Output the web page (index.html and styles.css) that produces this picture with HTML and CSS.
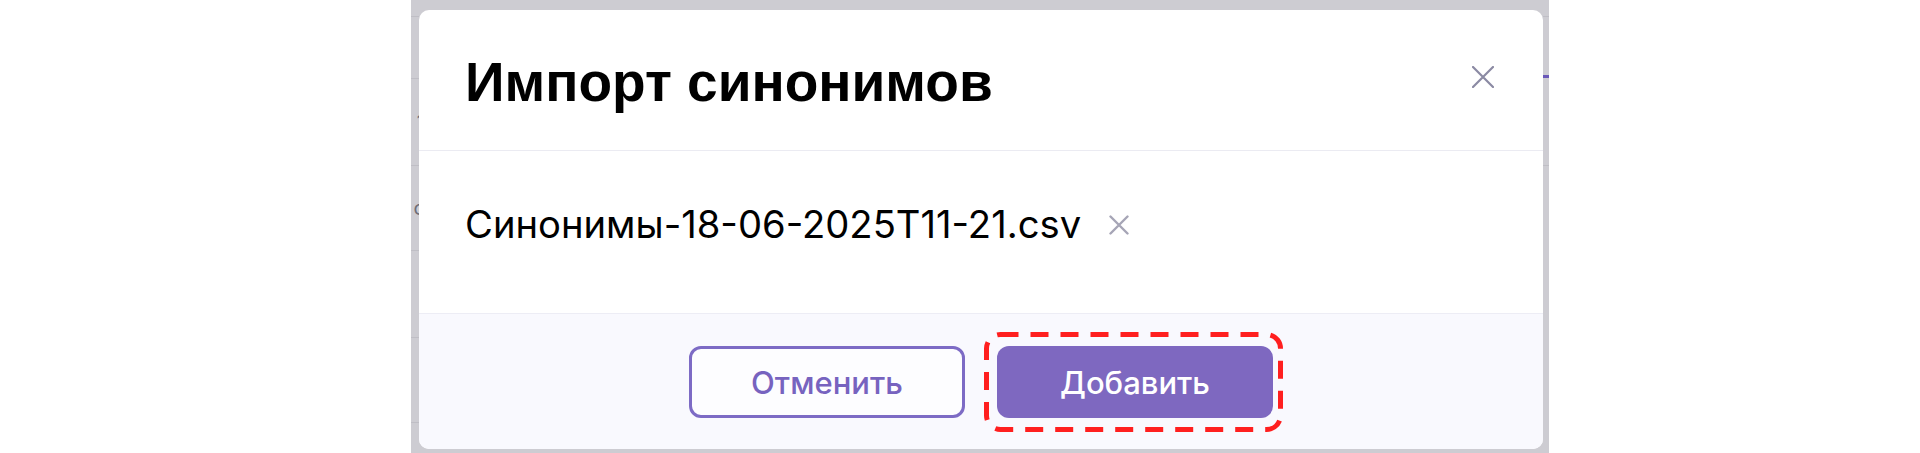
FILE: index.html
```html
<!DOCTYPE html>
<html lang="ru">
<head>
<meta charset="utf-8">
<title>Импорт синонимов</title>
<link rel="stylesheet" href="styles.css">
</head>
<body>
<div class="screen">
  <div class="backdrop">
    <div class="edge edge-left">
      <div class="row h16"></div>
      <div class="row h62"></div>
      <div class="row h87"><span class="ghost">1</span></div>
      <div class="row h85"><span class="ghost">с</span></div>
      <div class="row h87"></div>
      <div class="row h85"></div>
    </div>
    <div class="modal-col">
      <div class="modal">
        <div class="modal-header">
          <h1 class="modal-title">Импорт синонимов</h1>
          <button class="close-btn" type="button" aria-label="Закрыть">
            <svg width="22" height="22" viewBox="0 0 22 22"><path d="M1 1L21 21M21 1L1 21" stroke="#8b8aa3" stroke-width="2.2" stroke-linecap="round"/></svg>
          </button>
        </div>
        <div class="modal-body">
          <div class="file-row">
            <span class="file-name">Синонимы-18-06-2025T11-21.csv</span>
            <button class="file-remove" type="button" aria-label="Удалить">
              <svg width="20" height="20" viewBox="0 0 20 20"><path d="M1.5 1.5L18.5 18.5M18.5 1.5L1.5 18.5" stroke="#a6a5b6" stroke-width="2.4" stroke-linecap="round"/></svg>
            </button>
          </div>
        </div>
        <div class="modal-footer">
          <button class="btn btn-outline" type="button">Отменить</button>
          <div class="focus-wrap">
            <button class="btn btn-primary" type="button">Добавить</button>
            <svg class="focus-ring" width="299" height="100" viewBox="0 0 299 100"><rect x="2.5" y="2.5" width="294" height="95" rx="14" ry="14" fill="none" stroke="#ff1f1f" stroke-width="5" stroke-dasharray="18 12"/></svg>
          </div>
        </div>
      </div>
    </div>
    <div class="edge edge-right">
      <div class="row h16"></div>
      <div class="row mark-row"><span class="mark"></span></div>
      <div class="row h88"></div>
    </div>
  </div>
</div>
</body>
</html>
```

FILE: styles.css
```css
* { box-sizing: border-box; }

html, body {
  margin: 0;
  padding: 0;
  background: #ffffff;
}

body {
  width: 1920px;
  height: 453px;
  overflow: hidden;
  font-family: Inter, "Noto Sans", sans-serif;
}

.screen {
  display: flex;
  height: 453px;
}

.backdrop {
  margin-left: 411px;
  width: 1138px;
  height: 453px;
  background: #cdccd2;
  display: flex;
}

.edge {
  display: flex;
  flex-direction: column;
  overflow: hidden;
}

.edge-left { width: 8px; }
.edge-right { width: 6px; }

.row {
  border-bottom: 1px solid #bfbec5;
  position: relative;
  display: flex;
  align-items: center;
  justify-content: flex-end;
}

.h16 { height: 17px; }
.h62 { height: 62px; }
.h87 { height: 87px; }
.h85 { height: 85px; }
.h88 { height: 88px; }
.mark-row { height: 61px; border-bottom: none; align-items: flex-start; padding-top: 58px; }

.ghost {
  font-family: Inter, sans-serif;
  font-size: 20px;
  color: #6f6e78;
  line-height: 1;
  margin-right: -6px;
}

.mark {
  display: block;
  width: 6px;
  height: 3px;
  background: #6a58b8;
}

.modal-col {
  width: 1124px;
  padding: 10px 0 4px;
  display: flex;
}

.modal {
  width: 100%;
  background: #ffffff;
  border-radius: 10px;
  display: flex;
  flex-direction: column;
  overflow: hidden;
}

.modal-header {
  height: 141px;
  border-bottom: 1px solid #ebebf2;
  display: flex;
  align-items: center;
  justify-content: space-between;
  padding: 4px 49px 0 46px;
}

.modal-title {
  margin: 0;
  font-family: "Liberation Sans", Arial, sans-serif;
  font-weight: 700;
  font-size: 55px;
  line-height: 1;
  color: #000000;
}

.close-btn,
.file-remove {
  border: 0;
  padding: 0;
  background: none;
  display: flex;
  cursor: pointer;
}

.close-btn { margin-top: -10px; }

.modal-body {
  height: 162px;
  display: flex;
  align-items: center;
  padding: 0 46px 16px;
}

.file-row {
  display: flex;
  align-items: center;
  gap: 28px;
}

.file-name {
  font-size: 38.2px;
  font-weight: 400;
  color: #000000;
  line-height: 1;
}

.file-remove { margin-top: 2px; }

.modal-footer {
  flex: 1;
  background: #f9f9fe;
  border-top: 1px solid #ededf5;
  display: flex;
  justify-content: center;
  align-items: flex-start;
  gap: 32px;
  padding-top: 32px;
}

.btn {
  width: 276px;
  height: 72px;
  border-radius: 12px;
  font-family: Inter, sans-serif;
  font-size: 31px;
  font-weight: 500;
  cursor: pointer;
}

.btn-outline {
  background: #fdfdff;
  border: 3px solid #7d6bc5;
  color: #7763bf;
}

.btn-primary {
  background: #7e68c0;
  border: 0;
  color: #ffffff;
}

.focus-wrap {
  position: relative;
  display: flex;
}

.focus-ring {
  position: absolute;
  left: -13px;
  top: -14px;
  pointer-events: none;
}
```
